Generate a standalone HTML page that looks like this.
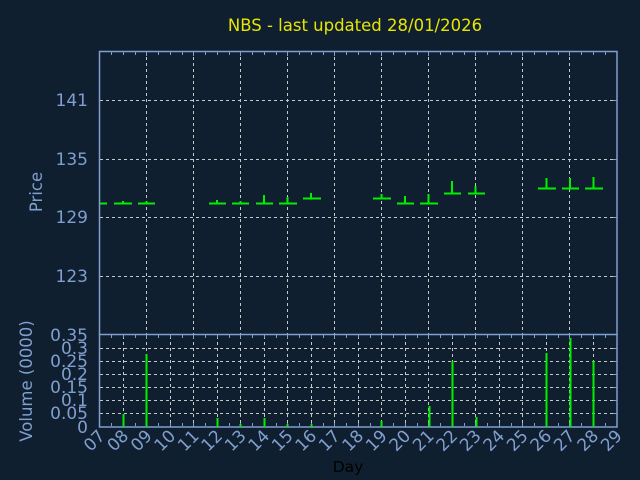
<!DOCTYPE html>
<html><head><style>
html,body{margin:0;padding:0;background:#101f30;}
svg{display:block;}
text{font-family:"DejaVu Sans","Liberation Sans",sans-serif;}
</style></head><body>
<svg width="640" height="480" viewBox="0 0 640 480" xmlns="http://www.w3.org/2000/svg">
<rect width="640" height="480" fill="#101f30"/>
<text x="355" y="31" fill="#e6e600" font-size="16.5" text-anchor="middle">NBS - last updated 28/01/2026</text>
<g stroke="#c8c8c8" stroke-width="1" stroke-dasharray="3,3" fill="none">
<path d="M100 100.5H617M100 159.5H617M100 217.5H617M100 276.5H617"/>
<path d="M146.5 51V334M193.5 51V334M240.5 51V334M287.5 51V334M334.5 51V334M381.5 51V334M428.5 51V334M475.5 51V334M522.5 51V334M569.5 51V334"/>
<path d="M100 348.5H617M100 361.5H617M100 374.5H617M100 387.5H617M100 400.5H617M100 413.5H617"/>
<path d="M123.5 336V427M146.5 336V427M170.5 336V427M193.5 336V427M217.5 336V427M240.5 336V427M264.5 336V427M287.5 336V427M311.5 336V427M334.5 336V427M358.5 336V427M381.5 336V427M405.5 336V427M428.5 336V427M452.5 336V427M475.5 336V427M499.5 336V427M522.5 336V427M546.5 336V427M569.5 336V427M593.5 336V427"/>
</g>
<g stroke="#7f9fcf" stroke-width="1.5" fill="none">
<path d="M99.5 334.5V51.5H617V334.5"/>
<rect x="99.5" y="334.5" width="517.5" height="92.5"/>
</g>
<g stroke="#7f9fcf" stroke-width="1" fill="none" id="tk">
<path d="M111.5 52v3M123.5 52v3M135.5 52v3M146.5 52v4M158.5 52v3M170.5 52v3M182.5 52v3M193.5 52v4M205.5 52v3M217.5 52v3M229.5 52v3M240.5 52v4M252.5 52v3M264.5 52v3M276.5 52v3M287.5 52v4M299.5 52v3M311.5 52v3M323.5 52v3M334.5 52v4M346.5 52v3M358.5 52v3M370.5 52v3M381.5 52v4M393.5 52v3M405.5 52v3M417.5 52v3M428.5 52v4M440.5 52v3M452.5 52v3M464.5 52v3M475.5 52v4M487.5 52v3M499.5 52v3M511.5 52v3M522.5 52v4M534.5 52v3M546.5 52v3M558.5 52v3M569.5 52v4M581.5 52v3M593.5 52v3M605.5 52v3"/>
</g>
<use href="#tk" transform="translate(0,283)"/>
<use href="#tk" transform="translate(0,371)"/>
<path d="M613 100.5h4M613 159.5h4M613 217.5h4M613 276.5h4M613 348.5h4M613 361.5h4M613 374.5h4M613 387.5h4M613 400.5h4M613 413.5h4" stroke="#7f9fcf" stroke-width="1"/>
<g fill="#7f9fcf" font-size="17" text-anchor="end">
<text x="88" y="106">141</text>
<text x="88" y="165">135</text>
<text x="88" y="223">129</text>
<text x="88" y="282">123</text>
<text x="88" y="341">0.35</text>
<text x="88" y="354">0.3</text>
<text x="88" y="367">0.25</text>
<text x="88" y="380">0.2</text>
<text x="88" y="393">0.15</text>
<text x="88" y="406">0.1</text>
<text x="88" y="419">0.05</text>
<text x="88" y="433">0</text>
</g>
<g fill="#7f9fcf" font-size="16.5" text-anchor="middle">
<text transform="translate(42,192) rotate(-90)">Price</text>
<text transform="translate(32,381) rotate(-90)">Volume (0000)</text>
</g>
<g fill="#7f9fcf" font-size="17" text-anchor="end">
<text transform="translate(106,437) rotate(-45)">07</text>
<text transform="translate(129.5,437) rotate(-45)">08</text>
<text transform="translate(153,437) rotate(-45)">09</text>
<text transform="translate(176.5,437) rotate(-45)">10</text>
<text transform="translate(200,437) rotate(-45)">11</text>
<text transform="translate(223.5,437) rotate(-45)">12</text>
<text transform="translate(247,437) rotate(-45)">13</text>
<text transform="translate(270.5,437) rotate(-45)">14</text>
<text transform="translate(294,437) rotate(-45)">15</text>
<text transform="translate(317.5,437) rotate(-45)">16</text>
<text transform="translate(341,437) rotate(-45)">17</text>
<text transform="translate(364.5,437) rotate(-45)">18</text>
<text transform="translate(388,437) rotate(-45)">19</text>
<text transform="translate(411.5,437) rotate(-45)">20</text>
<text transform="translate(435,437) rotate(-45)">21</text>
<text transform="translate(458.5,437) rotate(-45)">22</text>
<text transform="translate(482,437) rotate(-45)">23</text>
<text transform="translate(505.5,437) rotate(-45)">24</text>
<text transform="translate(529,437) rotate(-45)">25</text>
<text transform="translate(552.5,437) rotate(-45)">26</text>
<text transform="translate(576,437) rotate(-45)">27</text>
<text transform="translate(599.5,437) rotate(-45)">28</text>
<text transform="translate(623,437) rotate(-45)">29</text>
</g>
<g stroke="#00ee00" stroke-width="2" fill="none">
<path d="M100 203.5H107"/>
<path d="M114 203.5H132M123 203V201"/>
<path d="M138 203.5H155M146.5 203V201"/>
<path d="M209 203.5H226M217 203V200"/>
<path d="M232 203.5H249M240.5 203V201"/>
<path d="M256 203.5H273M264 203V195"/>
<path d="M279 203.5H297M287.5 203V197"/>
<path d="M303 198.5H321M311 198V193"/>
<path d="M373 198.5H391M381.5 198V194"/>
<path d="M397 203.5H414M405 203V196"/>
<path d="M420 203.5H438M428.5 203V194"/>
<path d="M444 193.5H461M452 193V181"/>
<path d="M468 193.5H485M475.5 193V186"/>
<path d="M538 188.5H556M546.5 188V178"/>
<path d="M562 188.5H579M570 188V178"/>
<path d="M585 188.5H603M593.5 188V177"/>
</g>
<g stroke="#00ee00" stroke-width="2" fill="none">
<path d="M123.5 427V414M146.5 427V354M217.5 427V418M240.5 427V424M264.5 427V418M287.5 427V424M311.5 427V424M381.5 427V421M429.5 427V406M452.5 427V361M476.5 427V417M546.5 427V353M570.5 427V338M593.5 427V361"/>
</g>
<text x="348" y="472" fill="#000000" font-size="15.5" text-anchor="middle">Day</text>
</svg>
</body></html>
